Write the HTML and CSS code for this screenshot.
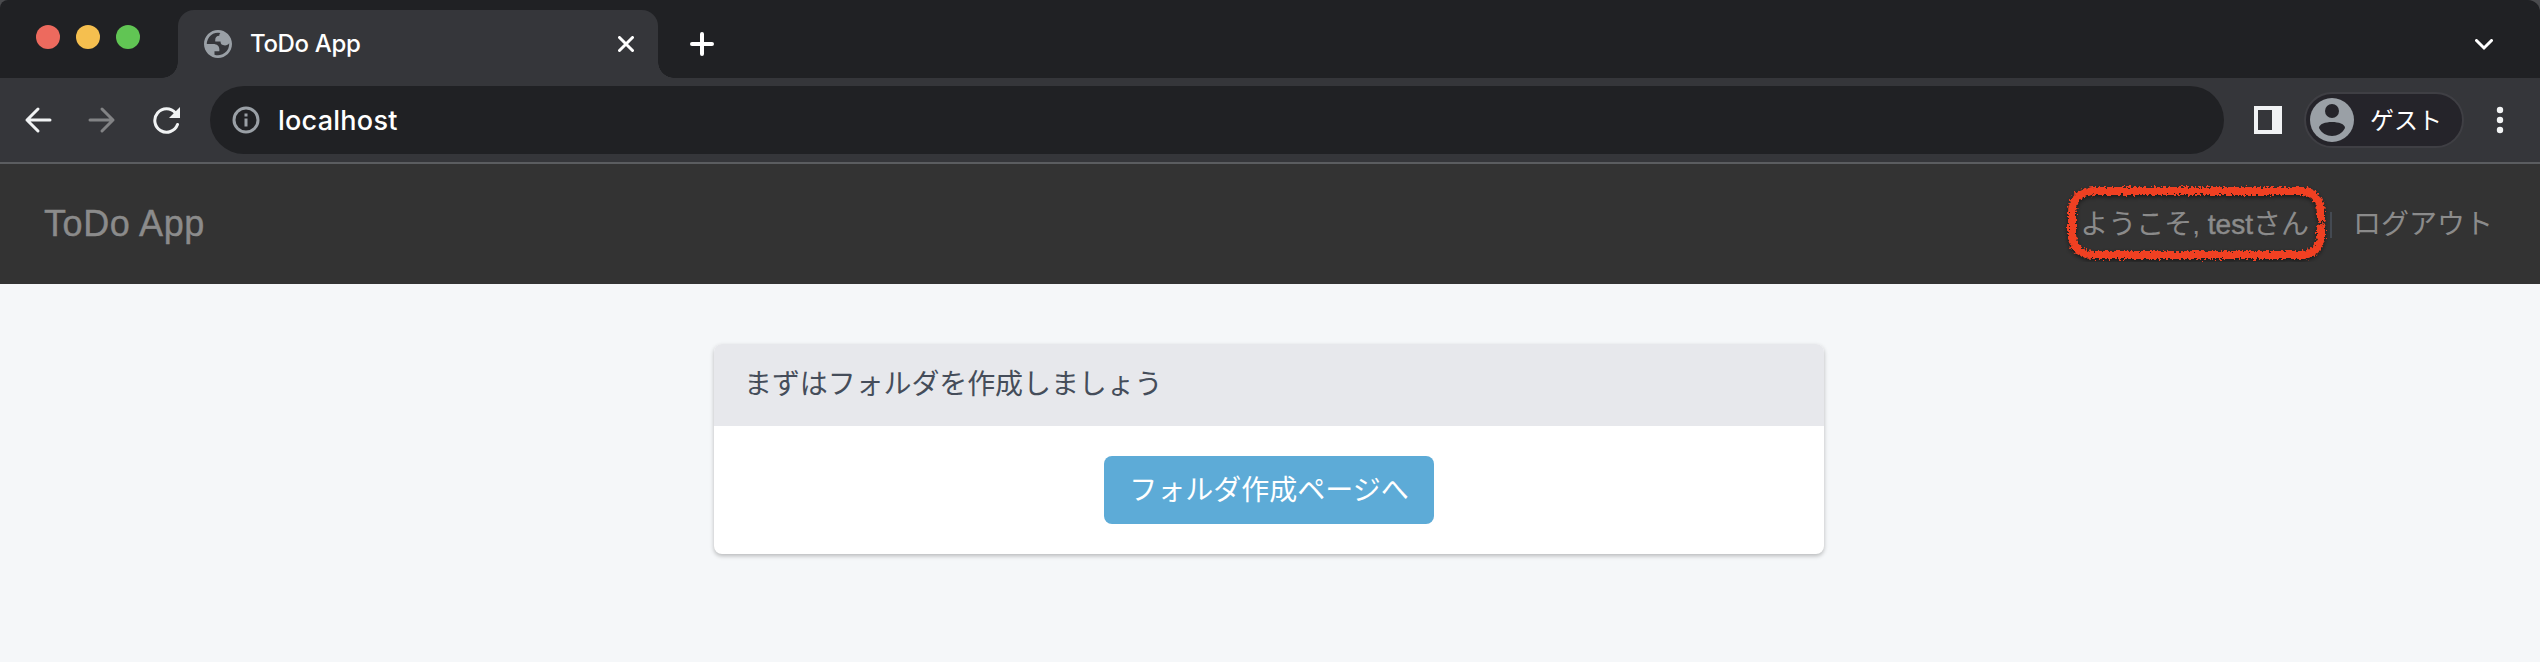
FILE: index.html
```html
<!DOCTYPE html>
<html lang="ja">
<head>
<meta charset="utf-8">
<title>ToDo App</title>
<link rel="stylesheet" href="styles.css">
</head>
<body>
<div class="window-top"><div class="tabstrip">
  <div class="lights"><i class="light red"></i><i class="light yellow"></i><i class="light green"></i></div>
  <div class="tab">
    <svg class="globe" viewBox="2 2 20 20"><path fill="#9aa0a6" fill-rule="evenodd" d="M12 2C6.480 2 2 6.480 2 12s4.480 10 10 10 10-4.480 10-10S17.520 2 12 2zM4 12h4.400c3.407.022 4.922 1.730 4.543 5.127H9.488v2.470a8.004 8.004 0 0 0 10.498-8.083C19.327 12.504 18.332 13 17 13c-2.137 0-3.206-.916-3.206-2.750h-3.748c-.274-2.728.683-4.092 2.870-4.092 0-.975.327-1.597.811-1.970A8.004 8.004 0 0 0 4 12z"/></svg>
    <span class="tab-title">ToDo App</span>
    <svg class="close" viewBox="0 0 16 16"><path d="M1.500 1.500l13 13M14.500 1.500l-13 13"/></svg>
  </div>
  <svg class="plus" viewBox="0 0 24 24"><path d="M12 2v20M2 12h20"/></svg>
  <svg class="chevron" viewBox="0 0 18 12"><path d="M1.500 1.500L9 9l7.500-7.500"/></svg>
</div></div>
<div class="toolbar">
  <svg class="nav back" viewBox="0 0 28 28"><path d="M26 14H3M14 3L3 14l11 11"/></svg>
  <svg class="nav forward" viewBox="0 0 28 28"><path d="M2 14h23M14 3l11 11-11 11"/></svg>
  <svg class="nav reload" viewBox="0 0 28 28"><path d="M23.500 7A11.700 11.700 0 1 0 25.500 18.500"/><path class="tip" d="M28 1v11H17z"/></svg>
  <div class="omnibox">
    <svg class="info" viewBox="0 0 28 28"><circle cx="14" cy="14" r="12"/><path d="M14 7.500v3M14 12.500v8"/></svg>
    <span class="url">localhost</span>
  </div>
  <svg class="panel" viewBox="0 0 28 28"><path fill="#f1f3f4" fill-rule="evenodd" d="M0 0h28v28H0zM4 4v20h14V4z"/></svg>
  <div class="profile">
    <svg class="avatar" viewBox="0 0 44 44"><circle cx="22" cy="22" r="22" fill="#9aa0a6"/><circle cx="22" cy="13" r="7" fill="#25242a"/><path fill="#25242a" d="M9 30c0-8 26-8 26 0-5 10.500-21 10.500-26 0z"/></svg>
    <span>ゲスト</span>
  </div>
  <svg class="more" viewBox="0 0 8 28"><circle cx="4" cy="4" r="3.200"/><circle cx="4" cy="14" r="3.200"/><circle cx="4" cy="24" r="3.200"/></svg>
</div>
<header class="header">
  <a class="brand">ToDo App</a>
  <nav class="menu">
    <span class="welcome">ようこそ, <span class="latin">test</span>さん
      <svg class="marker" viewBox="0 0 276 92">
        <defs><filter id="crayon" x="-5%" y="-10%" width="110%" height="120%">
          <feTurbulence type="fractalNoise" baseFrequency="0.4" numOctaves="2" seed="4" result="n"/>
          <feDisplacementMap in="SourceGraphic" in2="n" scale="7" xChannelSelector="R" yChannelSelector="G"/>
          <feDropShadow dx="0" dy="2" stdDeviation="2" flood-color="#000" flood-opacity=".5"/>
        </filter></defs>
        <path filter="url(#crayon)" d="M262 38V31Q260 13 244 11H34Q14 12 13 32V56Q14 73 34 75H244Q260 73 262 56V48"/>
      </svg>
    </span>
    <span class="divider"></span>
    <a class="logout">ログアウト</a>
  </nav>
</header>
<main class="page">
  <section class="card">
    <div class="card-head">まずはフォルダを作成しましょう</div>
    <div class="card-body"><a class="button">フォルダ作成ページへ</a></div>
  </section>
</main>
</body>
</html>
```
FILE: styles.css
```css
* { box-sizing: border-box; }
body { margin: 0; width: 2540px; height: 662px; overflow: hidden; background: #f5f7f9; font-family: "Liberation Sans", "Noto Sans CJK JP", sans-serif; }
svg { display: block; flex: none; fill: none; }
.window-top { background: #4a4b4e; }
.tabstrip { height: 78px; display: flex; background: #202124; border-radius: 8px 12px 0 0; }
.lights { display: flex; gap: 16px; padding: 25px 0 0 36px; width: 178px; }
.light { width: 24px; height: 24px; border-radius: 50%; }
.red { background: #ed6a5e; }
.yellow { background: #f5bf4f; }
.green { background: #61c554; }
.tab { position: relative; width: 480px; height: 68px; margin-top: 10px; padding: 0 24px 0 26px; display: flex; align-items: center; background: #35363a; border-radius: 16px 16px 0 0; color: #fff; }
.tab::before, .tab::after { content: ""; position: absolute; bottom: 0; width: 16px; height: 16px; }
.tab::before { left: -16px; background: radial-gradient(circle at 0 0, transparent 15.500px, #35363a 16px); }
.tab::after { right: -16px; background: radial-gradient(circle at 100% 0, transparent 15.500px, #35363a 16px); }
.globe { width: 28px; height: 28px; }
.tab-title { flex: 1; margin-left: 18px; font: 500 24px/30px Inter, sans-serif; letter-spacing: -0.350px; }
.close { width: 16px; height: 16px; stroke: #fff; stroke-width: 3; stroke-linecap: round; }
.plus { width: 24px; height: 24px; margin: 32px 0 0 32px; stroke: #fff; stroke-width: 4; stroke-linecap: round; }
.chevron { width: 18px; height: 12px; margin: 39px 47px 0 auto; stroke: #fff; stroke-width: 3; stroke-linecap: round; }
.toolbar { height: 86px; display: flex; align-items: center; background: #35363a; border-bottom: 2px solid #5b5d60; }
.nav { width: 28px; height: 28px; stroke: #f1f3f4; stroke-width: 3; stroke-linecap: round; stroke-linejoin: round; }
.back { margin-left: 24px; }
.forward { margin-left: 36px; stroke: #828385; }
.reload { margin-left: 36px; }
.tip { fill: #f1f3f4; stroke: none; }
.omnibox { width: 2014px; height: 68px; margin-left: 30px; padding-left: 22px; display: flex; align-items: center; background: #202124; border-radius: 34px; color: #fff; }
.info { width: 28px; height: 28px; stroke: #9aa0a6; stroke-width: 3; }
.url { margin-left: 18px; padding-top: 1px; font: 500 27px/34px Inter, sans-serif; letter-spacing: 0.250px; }
.panel { width: 28px; height: 28px; margin-left: 30px; }
.profile { width: 160px; height: 56px; margin-left: 22px; padding-left: 4px; display: flex; align-items: center; border: 2px solid #3f3f44; border-radius: 28px; background: #25242a; color: #fff; font-size: 24px; line-height: 28px; }
.profile span { margin-left: 16px; padding-top: 2px; }
.avatar { width: 44px; height: 44px; }
.more { width: 8px; height: 28px; margin-left: 32px; fill: #f1f3f4; }
.header { height: 120px; padding: 0 47px 0 44px; display: flex; align-items: center; justify-content: space-between; background: #333; color: #8b8b8b; }
.brand { font-size: 36px; line-height: 40px; letter-spacing: 0.600px; -webkit-text-stroke: 0.400px #8b8b8b; }
.menu { display: flex; align-items: center; font-size: 28px; line-height: 36px; padding-top: 1px; }
.latin { -webkit-text-stroke: 0.500px #8b8b8b; }
.welcome { position: relative; white-space: nowrap; }
.marker { position: absolute; left: -21px; top: -27px; width: 276px; height: 92px; stroke: #f04123; stroke-width: 8; stroke-linecap: round; }
.divider { width: 2px; height: 26px; margin: 0 21px; background: #444a52; }
.page { padding-top: 60px; }
.card { width: 1110px; margin-left: 714px; border-radius: 8px; overflow: hidden; background: #fff; box-shadow: 0 2px 4px rgba(0,0,0,.25); }
.card-head { height: 82px; padding: 0 30px; line-height: 82px; font-size: 28px; letter-spacing: -0.100px; color: #454d5a; background: #e7e8ec; }
.card-body { height: 128px; padding-top: 30px; display: flex; justify-content: center; }
.button { width: 330px; height: 68px; border-radius: 8px; background: #5dabd7; color: #fff; font-size: 28px; line-height: 69px; text-align: center; }
```
